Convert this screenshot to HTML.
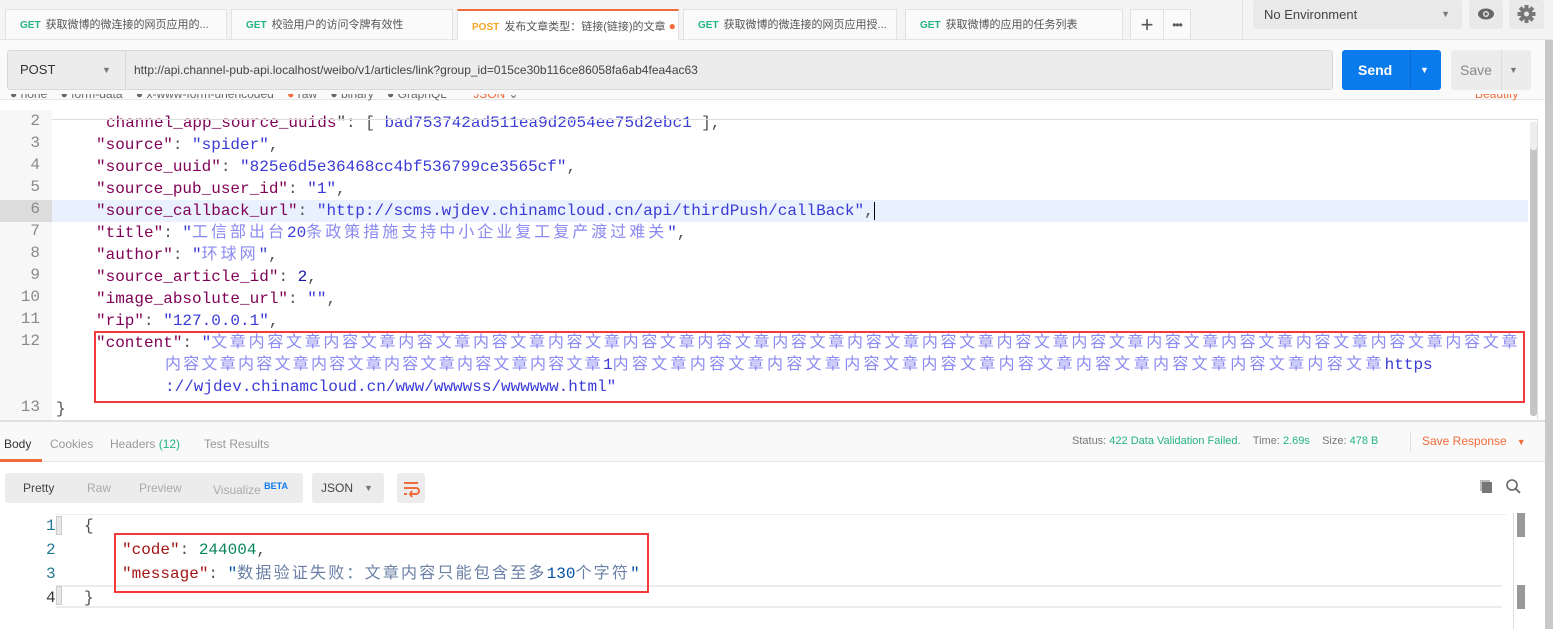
<!DOCTYPE html>
<html><head><meta charset="utf-8"><style>
*{margin:0;padding:0;box-sizing:border-box}
body{width:1553px;height:629px;overflow:hidden;background:#fff;font-family:"Liberation Sans","Noto Sans CJK SC",sans-serif;font-size:12px;color:#505050;position:relative}
.abs{position:absolute}
.tab{position:absolute;top:9px;height:30px;background:#fafafa;border:1px solid #e2e2e2;border-bottom:none;font-size:11px;line-height:30px;padding-left:14px;color:#555;white-space:nowrap;overflow:hidden}
.get{color:#26b47f;font-weight:bold;font-size:10px;margin-right:5px}
.post{color:#f5a623;font-weight:bold;font-size:10px;margin-right:5px}
.mono{font-family:"Liberation Mono","Noto Sans CJK SC",monospace;font-size:16px;white-space:pre}
.c{letter-spacing:3px}
.k{color:#7f0055}
.s{color:#3a3ad6}
.sc{color:#8a8af0}
.n{color:#1a1aa6}
.ln{position:absolute;left:0;width:40px;text-align:right;color:#8a8a8a;font-family:"Liberation Mono",monospace;font-size:16px}
.line{position:absolute;left:96px;height:22px;line-height:22px}
</style></head><body>
<div class="abs" style="left:0;top:0;width:1553px;height:40px;background:#f4f4f4;border-bottom:1px solid #e4e4e4"></div>
<div class="tab" style="left:5px;width:222px"><span class="get">GET</span>获取微博的微连接的网页应用的...</div>
<div class="tab" style="left:231px;width:222px"><span class="get">GET</span>校验用户的访问令牌有效性</div>
<div class="tab" style="left:457px;width:222px;background:#fff;border-top:2px solid #f26b3a;height:31px"><span class="post">POST</span>发布文章类型：链接(链接)的文章 <span style="color:#f26b3a;font-size:12px">●</span></div>
<div class="tab" style="left:683px;width:214px"><span class="get">GET</span>获取微博的微连接的网页应用授...</div>
<div class="tab" style="left:905px;width:218px"><span class="get">GET</span>获取微博的应用的任务列表</div>
<div class="tab" style="left:1130px;width:34px;padding:0;text-align:center;font-size:22px;color:#555">+</div>
<div class="tab" style="left:1163px;width:28px;padding:0;text-align:center;font-size:12px;color:#555;letter-spacing:-1px">•••</div>
<div class="abs" style="left:1242px;top:0;width:1px;height:40px;background:#e4e4e4"></div>
<div class="abs" style="left:1253px;top:0;width:209px;height:29px;background:#e9e9e9;border-radius:3px;font-size:13px;line-height:29px;padding-left:11px;color:#444">No Environment<span style="position:absolute;right:12px;font-size:9px;color:#777">▼</span></div>
<div class="abs" style="left:1469px;top:0;width:34px;height:29px;background:#e9e9e9;border-radius:3px"><svg width="34" height="29"><ellipse cx="17" cy="14" rx="8" ry="5.5" fill="#666"/><circle cx="17" cy="14" r="3" fill="#e9e9e9"/><circle cx="17" cy="14" r="1.6" fill="#666"/></svg></div>
<div class="abs" style="left:1509px;top:0;width:35px;height:29px;background:#e9e9e9;border-radius:3px"><svg width="35" height="29"><g fill="#777" transform="translate(17.5 14)"><circle r="6"/><rect x="-2" y="-9" width="4" height="18"/><rect x="-9" y="-2" width="18" height="4"/><rect x="-2" y="-9" width="4" height="18" transform="rotate(45)"/><rect x="-2" y="-9" width="4" height="18" transform="rotate(-45)"/><circle r="2.5" fill="#e9e9e9"/></g></svg></div>
<div class="abs" style="left:0;top:40px;width:1553px;height:60px;background:#fafafa;border-bottom:1px solid #e6e6e6"></div>
<div class="abs" style="left:7px;top:50px;width:1326px;height:40px;background:#ececec;border:1px solid #d8d8d8;border-radius:3px"></div>
<div class="abs" style="left:125px;top:51px;width:1px;height:38px;background:#d8d8d8"></div>
<div class="abs" style="left:20px;top:50px;line-height:40px;font-size:13px;color:#333">POST</div>
<div class="abs" style="left:102px;top:50px;line-height:40px;font-size:9px;color:#777">▼</div>
<div class="abs" style="left:134px;top:50px;line-height:40px;font-size:12px;color:#444">http://api.channel-pub-api.localhost/weibo/v1/articles/link?group_id=015ce30b116ce86058fa6ab4fea4ac63</div>
<div class="abs" style="left:1342px;top:50px;width:99px;height:40px;background:#097bed;border-radius:3px;color:#fff;font-weight:bold;font-size:14px;line-height:40px"><span style="position:absolute;left:16px">Send</span><span style="position:absolute;left:68px;top:0;width:1px;height:40px;background:#0a6acb"></span><span style="position:absolute;left:78px;font-size:9px">▼</span></div>
<div class="abs" style="left:1451px;top:50px;width:80px;height:40px;background:#ececec;border-radius:3px;color:#888;font-size:14px;line-height:40px"><span style="position:absolute;left:9px">Save</span><span style="position:absolute;left:50px;top:0;width:1px;height:40px;background:#ddd"></span><span style="position:absolute;left:58px;font-size:9px;color:#777">▼</span></div>
<div class="abs" style="left:10px;top:94px;height:12px;overflow:hidden;width:1540px;font-size:12px;color:#666;white-space:nowrap">
<div style="position:relative;top:-7px">● none &nbsp;&nbsp;&nbsp;● form-data &nbsp;&nbsp;&nbsp;● x-www-form-urlencoded &nbsp;&nbsp;&nbsp;<span style="color:#f26b3a">●</span> raw &nbsp;&nbsp;&nbsp;● binary &nbsp;&nbsp;&nbsp;● GraphQL &nbsp;&nbsp;&nbsp;&nbsp;&nbsp;&nbsp;&nbsp;<span style="color:#f26b3a">JSON</span> ⌄<span style="position:absolute;left:1465px;color:#f26b3a">Beautify</span></div></div>
<div class="abs" style="left:0;top:110px;width:52px;height:310px;background:#f7f7f7"></div>
<div class="abs" style="left:0;top:200px;width:52px;height:22px;background:#dcdcdc"></div>
<div class="abs" style="left:52px;top:200px;width:1476px;height:22px;background:#e8f1fd"></div>
<div class="abs" style="left:1530px;top:122px;width:7px;height:294px;background:#c5c5c5;border-radius:3px"></div>
<div class="abs" style="left:1530px;top:122px;width:7px;height:28px;background:#eee;border-radius:3px"></div>
<div class="abs" style="left:1545px;top:40px;width:8px;height:589px;background:#c8c8c8"></div>
<div class="abs" style="left:0;top:114px;width:1528px;height:20px;overflow:hidden">
<div class="ln" style="top:-2px">2</div><div class="line mono" style="top:-2px;left:106px"><span class="k">channel_app_source_uuids</span>": [ <span class="s">bad753742ad511ea9d2054ee75d2ebc1</span> ],</div>
</div>
<div class="abs" style="left:52px;top:119px;width:1486px;height:300px;border-top:1px solid #ddd;border-right:1px solid #ddd"></div>
<div class="abs" style="left:0;top:134px;width:1528px;height:290px">
<div class="ln" style="top:0">3</div><div class="line mono" style="top:0"><span class="k">"source"</span>: <span class="s">"spider"</span>,</div>
<div class="ln" style="top:22px">4</div><div class="line mono" style="top:22px"><span class="k">"source_uuid"</span>: <span class="s">"825e6d5e36468cc4bf536799ce3565cf"</span>,</div>
<div class="ln" style="top:44px">5</div><div class="line mono" style="top:44px"><span class="k">"source_pub_user_id"</span>: <span class="s">"1"</span>,</div>
<div class="ln" style="top:66px">6</div><div class="line mono" style="top:66px"><span class="k">"source_callback_url"</span>: <span class="s">"http://scms.wjdev.chinamcloud.cn/api/thirdPush/callBack"</span>,<span style="border-left:1px solid #000"></span></div>
<div class="ln" style="top:88px">7</div><div class="line mono" style="top:88px"><span class="k">"title"</span>: <span class="s">"<span class="sc" style="letter-spacing:3px">工信部出台</span>20<span class="sc" style="letter-spacing:3px">条政策措施支持中小企业复工复产渡过难关</span>"</span>,</div>
<div class="ln" style="top:110px">8</div><div class="line mono" style="top:110px"><span class="k">"author"</span>: <span class="s">"<span class="c sc">环球网</span>"</span>,</div>
<div class="ln" style="top:132px">9</div><div class="line mono" style="top:132px"><span class="k">"source_article_id"</span>: <span class="n">2</span>,</div>
<div class="ln" style="top:154px">10</div><div class="line mono" style="top:154px"><span class="k">"image_absolute_url"</span>: <span class="s">""</span>,</div>
<div class="ln" style="top:176px">11</div><div class="line mono" style="top:176px"><span class="k">"rip"</span>: <span class="s">"127.0.0.1"</span>,</div>
<div class="ln" style="top:198px">12</div><div class="line mono" style="top:198px;width:1430px;overflow:hidden"><span class="k">"content"</span>: <span class="s">"<span class="c sc" style="letter-spacing:2.7px">文章内容文章内容文章内容文章内容文章内容文章内容文章内容文章内容文章内容文章内容文章内容文章内容文章内容文章内容文章内容文章内容文章内容文章</span></span></div>
<div class="line mono" style="top:220px;left:165px"><span class="sc" style="letter-spacing:2.25px">内容文章内容文章内容文章内容文章内容文章内容文章</span><span class="s">1</span><span class="sc" style="letter-spacing:3.3px">内容文章内容文章内容文章内容文章内容文章内容文章内容文章内容文章内容文章内容文章</span><span class="s">https</span></div>
<div class="line mono s" style="top:242px;left:165px">://wjdev.chinamcloud.cn/www/wwwwss/wwwwww.html"</div>
<div class="ln" style="top:264px">13</div><div class="line mono" style="top:264px;left:56px">}</div>
</div>
<div class="abs" style="left:94px;top:331px;width:1431px;height:72px;border:2px solid #f23a3a"></div>
<div class="abs" style="left:0;top:420px;width:1545px;height:42px;background:#f9f9f9;border-top:2px solid #e0e0e0;border-bottom:1px solid #e6e6e6"></div>
<div class="abs" style="left:4px;top:437px;font-size:12px;color:#333">Body</div>
<div class="abs" style="left:0;top:459px;width:42px;height:3px;background:#f26b3a"></div>
<div class="abs" style="left:50px;top:437px;font-size:12px;color:#999">Cookies</div>
<div class="abs" style="left:110px;top:437px;font-size:12px;color:#999">Headers <span style="color:#26b47f">(12)</span></div>
<div class="abs" style="left:204px;top:437px;font-size:12px;color:#999">Test Results</div>
<div class="abs" style="left:1072px;top:435px;font-size:11px;color:#777">Status: <span style="color:#26b47f">422 Data Validation Failed.</span>&nbsp;&nbsp;&nbsp;&nbsp;Time: <span style="color:#26b47f">2.69s</span>&nbsp;&nbsp;&nbsp;&nbsp;Size: <span style="color:#26b47f">478 B</span></div>
<div class="abs" style="left:1410px;top:432px;width:1px;height:20px;background:#e0e0e0"></div>
<div class="abs" style="left:1422px;top:434px;font-size:12px;color:#f26b3a">Save Response&nbsp;&nbsp;&nbsp;<span style="font-size:9px">▼</span></div>
<div class="abs" style="left:5px;top:473px;width:298px;height:30px;background:#ececec;border-radius:3px"></div>
<div class="abs" style="left:23px;top:481px;font-size:12px;color:#444">Pretty</div>
<div class="abs" style="left:87px;top:481px;font-size:12px;color:#aaa">Raw</div>
<div class="abs" style="left:139px;top:481px;font-size:12px;color:#aaa">Preview</div>
<div class="abs" style="left:213px;top:481px;font-size:12px;color:#aaa">Visualize <sup style="color:#097bed;font-size:9px;font-weight:bold">BETA</sup></div>
<div class="abs" style="left:312px;top:473px;width:72px;height:30px;background:#ececec;border-radius:3px;font-size:12px;line-height:30px;padding-left:9px;color:#444">JSON<span style="position:absolute;left:52px;font-size:9px;color:#777">▼</span></div>
<div class="abs" style="left:397px;top:473px;width:28px;height:30px;background:#ececec;border-radius:3px"><svg width="28" height="30"><g stroke="#f26b3a" stroke-width="2" fill="none"><path d="M7 10h14M7 15h12a3 3 0 0 1 0 6h-5M7 21h3"/><path d="M15 18l-2 3 2 3"/></g></svg></div>
<svg class="abs" style="left:1478px;top:478px" width="16" height="16"><rect x="2" y="2" width="10" height="11" fill="#bbb"/><rect x="4" y="4" width="10" height="11" fill="#777"/></svg>
<svg class="abs" style="left:1505px;top:478px" width="16" height="16"><circle cx="7" cy="7" r="5" stroke="#666" stroke-width="1.6" fill="none"/><path d="M11 11l4 4" stroke="#666" stroke-width="1.8"/></svg>
<div class="abs" style="left:56px;top:514px;width:1450px;height:22px;border-top:1px solid #eee"></div>
<div class="abs" style="left:56px;top:585px;width:1446px;height:23px;border-top:2px solid #ececec;border-bottom:2px solid #ececec"></div>
<div class="abs" style="left:1517px;top:513px;width:8px;height:24px;background:#999"></div>
<div class="abs" style="left:1517px;top:585px;width:8px;height:24px;background:#999"></div>
<div class="abs" style="left:1513px;top:513px;width:1px;height:116px;background:#ddd"></div>
<div class="abs" style="left:56px;top:516px;width:6px;height:19px;background:#e8e8e8;border:1px solid #ccc"></div>
<div class="abs" style="left:56px;top:586px;width:6px;height:19px;background:#e8e8e8;border:1px solid #ccc"></div>
<div class="abs mono" style="left:0;top:514px;line-height:24px;font-size:16px">
<div style="position:absolute;left:46px;top:0;color:#237893">1</div><div style="position:absolute;left:84px;top:0">{</div>
<div style="position:absolute;left:46px;top:24px;color:#237893">2</div><div style="position:absolute;left:122px;top:24px"><span style="color:#a31515">"code"</span>: <span style="color:#098658">244004</span>,</div>
<div style="position:absolute;left:46px;top:48px;color:#237893">3</div><div style="position:absolute;left:122px;top:48px"><span style="color:#a31515">"message"</span>: <span style="color:#0451a5">"<span style="color:#6a7fa5;letter-spacing:2.2px">数据验证失败：文章内容只能包含至多</span>130<span style="color:#6a7fa5;letter-spacing:2.2px">个字符</span>"</span></div>
<div style="position:absolute;left:46px;top:72px;color:#333">4</div><div style="position:absolute;left:84px;top:72px">}</div>
</div>
<div class="abs" style="left:114px;top:533px;width:535px;height:60px;border:2px solid #f23a3a"></div>
</body></html>
